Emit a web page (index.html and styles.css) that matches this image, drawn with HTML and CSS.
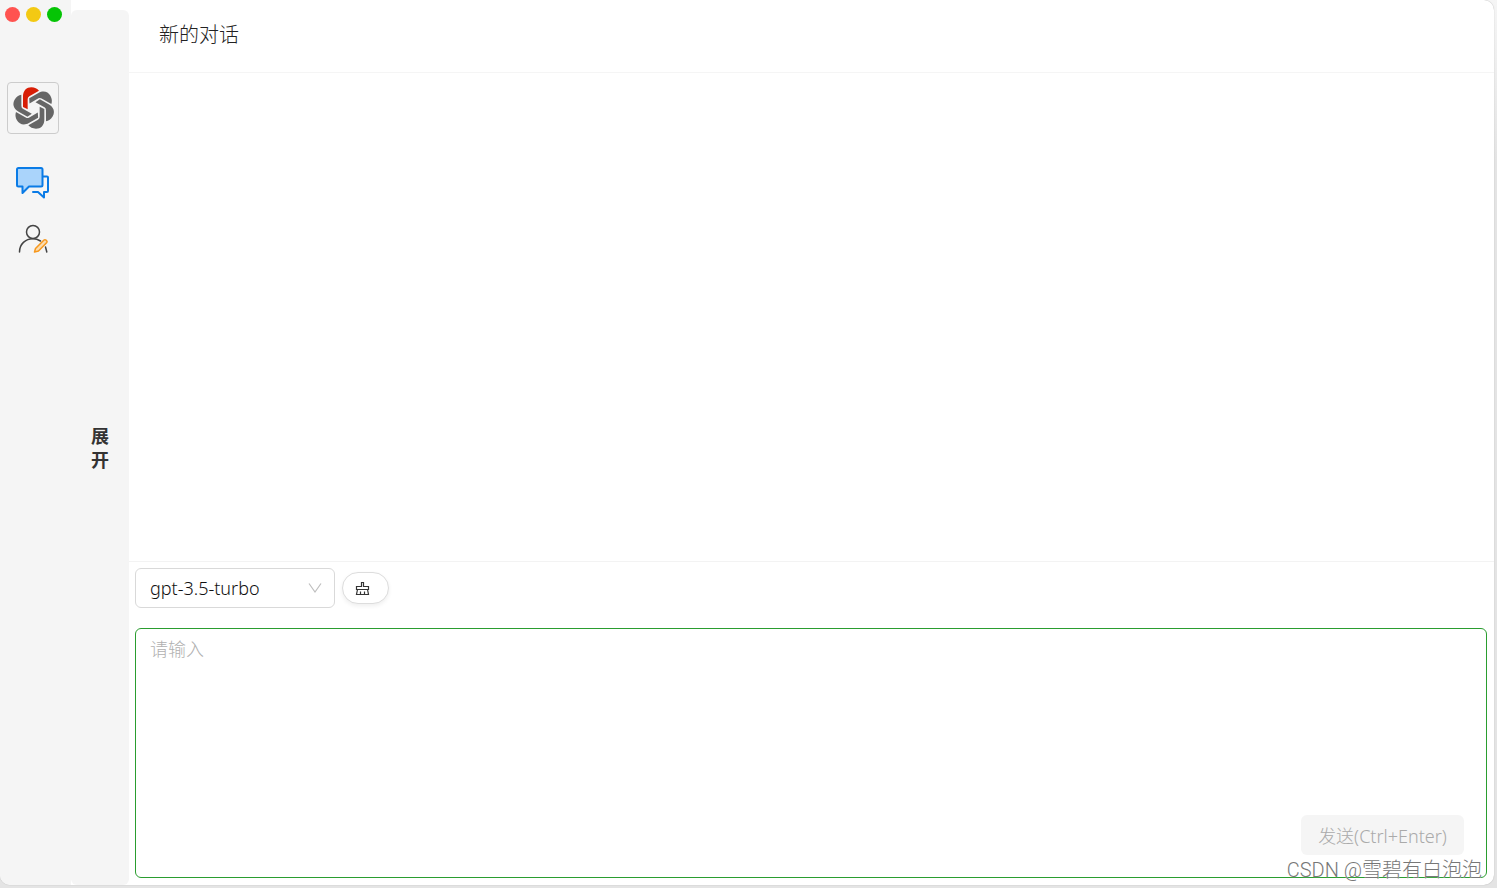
FILE: index.html
```
<!DOCTYPE html>
<html lang="zh-CN">
<head>
	<meta charset="utf-8">
	<meta name="viewport" content="width=device-width, initial-scale=1">
	<title>新的对话</title>
	<link rel="stylesheet" href="styles.css">
</head>
<body>
	<div class="window">
		<nav class="rail">
			<div class="lights">
				<button class="light light-close" type="button" aria-label="关闭"></button>
				<button class="light light-min" type="button" aria-label="最小化"></button>
				<button class="light light-max" type="button" aria-label="最大化"></button>
			</div>
			<div class="logo">
				<svg width="42" height="42" viewBox="-65 -63 126 126">
					<defs>
						<path id="blade" d="M-32 -3V-35C-32 -52 -21 -62 -7 -62C3 -62 11 -58 16 -52L-13 -35Q-18 -32 -18 -27V4Z"/>
					</defs>
					<g fill="#666">
						<use href="#blade" fill="#d81e06"/>
						<use href="#blade" transform="rotate(60)"/>
						<use href="#blade" transform="rotate(120)"/>
						<use href="#blade" transform="rotate(180)"/>
						<use href="#blade" transform="rotate(240)"/>
						<use href="#blade" transform="rotate(300)"/>
					</g>
				</svg>
			</div>
			<a class="rail-link" href="#chat" aria-label="对话">
				<svg width="36" height="34" viewBox="0 0 36 34" fill="none" stroke="#0a7be6" stroke-width="2" stroke-linejoin="round" stroke-linecap="round">
					<path d="M3.500 2H26Q27.500 2 27.500 3.500V19Q27.500 20.500 26 20.500H14L7.500 27V20.500H3.500Q2 20.500 2 19V3.500Q2 2 3.500 2Z" fill="#aad4fb"/>
					<path d="M28 10.500H32Q33 10.500 33 11.500V25Q33 26 32 26H29V31.500L23 26H18"/>
				</svg>
			</a>
			<a class="rail-link" href="#profile" aria-label="个人设置">
				<svg width="32" height="30" viewBox="0 0 32 30" fill="none" stroke="#444" stroke-width="1.500" stroke-linecap="round">
					<circle cx="16" cy="8" r="6.500"/>
					<path d="M2.500 28C2.500 20 8.500 14.800 16 14.800C19 14.800 21 15.500 23.500 17M28.500 23L29.800 28"/>
					<path d="M17.500 28L18.500 24.500L27 16Q28 15.200 29.300 16.300T29.800 18.500L21.500 27Z" fill="#fbdcb0" stroke="#f7981d" stroke-linejoin="round"/>
				</svg>
			</a>
		</nav>
		<button class="expand" type="button">展<br>开</button>
		<main class="main" id="chat">
			<header class="header">
				<h1>新的对话</h1>
			</header>
			<section class="messages"></section>
			<form class="composer">
				<div class="toolbar">
					<div class="model">
						<select aria-label="模型">
							<option>gpt-3.5-turbo</option>
						</select>
						<svg class="arrow" width="14" height="12" viewBox="0 0 14 12" fill="none" stroke="#bfbfbf" stroke-width="1.200">
							<path d="M1 1.500L7 10L13 1.500"/>
						</svg>
					</div>
					<button class="clear" type="button" aria-label="清空对话">
						<svg width="15" height="15" viewBox="0 0 15 15" fill="none" stroke="#333" stroke-width="1.200">
							<path d="M1.500 8.500V5.500H6.500V1.500H8.500V5.500H13.500V8.500ZM2.500 8.500L1.500 13.500H13.500L12.500 8.500M5.500 13.500V10.500M9.500 13.500V10.500"/>
						</svg>
					</button>
				</div>
				<div class="input-box">
					<textarea placeholder="请输入" aria-label="请输入"></textarea>
					<button class="send" type="submit" disabled>发送(Ctrl+Enter)</button>
				</div>
			</form>
		</main>
	</div>
	<div class="watermark">CSDN @雪碧有白泡泡</div>
</body>
</html>
```
FILE: styles.css
```
* {
	box-sizing: border-box;
}

body {
	margin: 0;
	height: 100vh;
	padding: 0 3px 3px 0;
	background: linear-gradient(#f5f5f5, #e4e4e4 160px);
	position: relative;
}

body, button, select, textarea {
	font-family: "Noto Sans", "Noto Sans CJK SC", sans-serif;
	font-size: 18px;
	font-weight: 300;
}

.window {
	display: flex;
	height: 100%;
	background: #fff;
	border-radius: 10px;
	border-top-left-radius: 0;
	box-shadow: 0 0 1px #0005;
	overflow: hidden;
}

.rail {
	display: flex;
	flex-direction: column;
	align-items: center;
	width: 71px;
	padding: 7px 5px 0 0;
	background: #f5f5f5;
}

.lights {
	display: flex;
	gap: 6px;
	align-self: flex-start;
	padding-left: 5px;
	margin-bottom: 60px;
}

.light {
	width: 15px;
	height: 15px;
	padding: 0;
	border: none;
	border-radius: 50%;
}

.light-close {
	background: #ff5350;
}

.light-min {
	background: #f3c913;
}

.light-max {
	background: #05c405;
}

.logo {
	display: flex;
	align-items: center;
	justify-content: center;
	width: 52px;
	height: 52px;
	margin-bottom: 32px;
	border: 1px solid #ccc;
	border-radius: 4px;
}

.rail-link {
	display: block;
	margin-bottom: 24px;
}

.rail-link svg {
	display: block;
}

.expand {
	width: 58px;
	margin-top: 10px;
	padding: 0;
	border: none;
	border-radius: 6px;
	background: #f5f5f5;
	color: #333;
	font-weight: bold;
	line-height: 24px;
}

.main {
	display: flex;
	flex-direction: column;
	flex: 1;
	min-width: 0;
}

.header {
	height: 73px;
	padding: 20px 30px;
	border-bottom: 1px solid #f5f5f5;
}

.header h1 {
	margin: 0;
	color: #222;
	font-size: 20px;
	font-weight: 300;
	line-height: 30px;
}

.messages {
	flex: 1;
}

.composer {
	padding: 6px 7px 7px 6px;
	border-top: 1px solid #f3f3f3;
}

.toolbar {
	display: flex;
	align-items: center;
	gap: 7px;
	margin-bottom: 20px;
}

.model {
	position: relative;
	width: 200px;
}

.model select {
	display: block;
	appearance: none;
	width: 100%;
	height: 40px;
	padding: 0 14px;
	border: 1px solid #d9d9d9;
	border-radius: 6px;
	background: #fff;
	color: #111;
}

.arrow {
	position: absolute;
	top: 14px;
	right: 13px;
	pointer-events: none;
}

.clear {
	display: flex;
	align-items: center;
	width: 47px;
	height: 32px;
	padding: 0 12px;
	border: 1px solid #ddd;
	border-radius: 16px;
	background: #fff;
	box-shadow: 0 2px 4px #0001;
}

.input-box {
	display: flex;
	flex-direction: column;
	height: 250px;
	padding: 6px 22px 22px 14px;
	border: 1px solid #2a9d2f;
	border-radius: 6px;
	background: #fff;
}

.input-box textarea {
	flex: 1;
	padding: 0;
	border: none;
	outline: none;
	resize: none;
	background: none;
	line-height: 28px;
}

.input-box textarea::placeholder {
	color: #b0b0b0;
}

.send {
	align-self: flex-end;
	width: 163px;
	height: 40px;
	padding: 0;
	border: none;
	border-radius: 6px;
	background: #f5f5f5;
	color: #aaa;
}

/* sits on top of everything in the corner */
.watermark {
	position: absolute;
	right: 15px;
	bottom: 4px;
	color: #777;
	font-family: Roboto, "Noto Sans CJK SC", sans-serif;
	font-size: 20px;
	line-height: 28px;
	text-shadow: 0 0 1px #fff;
	pointer-events: none;
}
```
